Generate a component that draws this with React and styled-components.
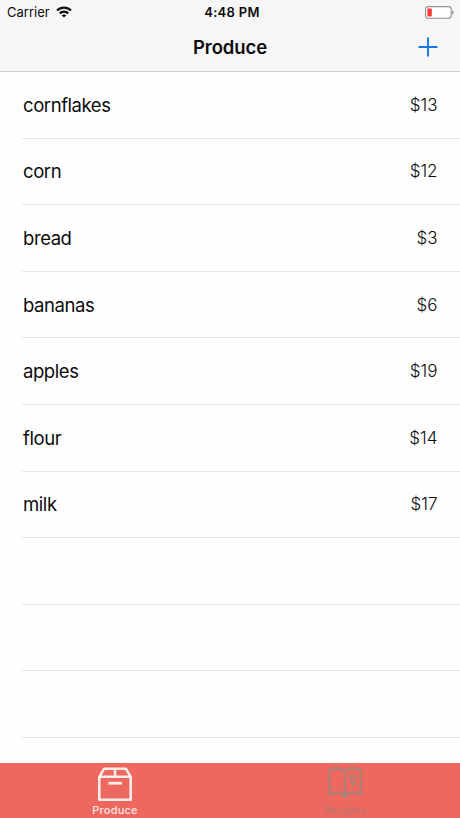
import styled, { createGlobalStyle } from "styled-components";

const items = [
  { name: "cornflakes", price: 13 },
  { name: "corn", price: 12 },
  { name: "bread", price: 3 },
  { name: "bananas", price: 6 },
  { name: "apples", price: 19 },
  { name: "flour", price: 14 },
  { name: "milk", price: 17 },
];

// the table keeps drawing separators below the last item
const emptyRows = [0, 1, 2];

const WifiIcon = () => (
  <svg width="16" height="12" viewBox="0 0 16 12" fill="none" stroke="#111" strokeWidth="2.4">
    <path d="M1.1 4.5C5 0.7 11 0.7 14.9 4.5" />
    <path d="M3.8 7.4C6.2 5.1 9.8 5.1 12.2 7.4" />
    <path d="M8 11.6L5.6 9.3C7 8.1 9 8.1 10.4 9.3Z" fill="#111" stroke="none" />
  </svg>
);

const BatteryIcon = () => (
  <svg width="29" height="13" viewBox="0 0 29 13">
    <rect x="0.6" y="0.6" width="25.6" height="11.6" rx="2.8" fill="#fff" stroke="#929294" strokeWidth="1.1" />
    <rect x="2.4" y="2.4" width="4.4" height="8" rx="0.8" fill="#fb3b35" />
    <path d="M27.2 4.4C29.1 5 29.1 7.8 27.2 8.4Z" fill="#929294" />
  </svg>
);

const PlusIcon = () => (
  <svg width="20" height="20" viewBox="0 0 20 20" stroke="#1478ee" strokeWidth="1.9">
    <path d="M10 0.5V19.5M0.5 10H19.5" />
  </svg>
);

const BoxIcon = () => (
  <svg width="36" height="35" viewBox="0 0 36 35" fill="none" stroke="#fdeceb" strokeWidth="2.6" strokeLinejoin="round">
    <path d="M2.3 9.8L7 1.8H29L33.7 9.8V32.8H2.3Z" />
    <path d="M2.3 9.8H33.7M18 1.8V9.8" />
    <path d="M11.5 16.2H25" strokeWidth="2.8" />
  </svg>
);

const BookIcon = () => (
  <svg width="36" height="32" viewBox="0 0 36 32" fill="none" stroke="#b27d73" strokeWidth="2.6" strokeLinejoin="round">
    <path d="M18 4C14 1 7.5 1 2.3 3V27.2C7.5 25 14 25 18 27.6C22 25 28.5 25 33.7 27.2V3C28.5 1 22 1 18 4Z" />
    <path d="M18 4V27.6" />
    <path d="M14.8 28C16 30.6 20 30.6 21.2 28" />
    <ellipse cx="26" cy="11.7" rx="2.3" ry="3.9" strokeWidth="2" />
    <path d="M26 13V20" strokeWidth="2.4" />
  </svg>
);

const App = () => {
  return (
    <Screen>
      <GlobalStyle />
      <Header>
        <StatusBar>
          <Carrier>Carrier<WifiIcon /></Carrier>
          <Time>4:48 PM</Time>
          <Battery><BatteryIcon /></Battery>
        </StatusBar>
        <NavBar>
          <Title>Produce</Title>
          <AddButton aria-label="Add"><PlusIcon /></AddButton>
        </NavBar>
      </Header>
      <List>
        {items.map((item) => (
          <Row key={item.name}>
            <Name>{item.name}</Name>
            <Price>${item.price}</Price>
          </Row>
        ))}
        {emptyRows.map((row) => <Row key={row} />)}
      </List>
      <TabBar>
        <Tab $active><BoxIcon /><TabLabel>Produce</TabLabel></Tab>
        <Tab><BookIcon /><TabLabel>Recipes</TabLabel></Tab>
      </TabBar>
    </Screen>
  );
};

export default App;

const GlobalStyle = createGlobalStyle`
  body {
    margin: 0;
    background: #fefefe;
  }
`;

const Screen = styled.div`
  display: flex;
  flex-direction: column;
  height: 818px;
  overflow: hidden;
  background: #fefefe;
  color: #0c0c0c;
  font-family: Inter, "Liberation Sans", sans-serif;
`;

const Header = styled.header`
  box-sizing: border-box;
  height: 72px;
  flex-shrink: 0;
  background: #f6f6f6;
  border-bottom: 1px solid #d0d0d0;
`;

const StatusBar = styled.div`
  display: grid;
  grid-template-columns: 1fr auto 1fr;
  align-items: center;
  height: 24px;
  padding: 0 6px 0 7px;
`;

const Carrier = styled.div`
  display: flex;
  align-items: center;
  gap: 6px;
  font-size: 13px;
  letter-spacing: 0;
`;

const Time = styled.div`
  font-size: 13px;
  font-weight: 600;
  letter-spacing: 0.3px;
  padding-left: 3px;
`;

const Battery = styled.div`
  display: flex;
  justify-content: flex-end;
`;

const NavBar = styled.div`
  display: grid;
  grid-template-columns: 1fr auto 1fr;
  align-items: center;
  height: 45px;
  padding: 0 22px;
`;

const Title = styled.h1`
  grid-column: 2;
  margin: 0;
  font-size: 18.5px;
  font-weight: 600;
  letter-spacing: -0.1px;
`;

const AddButton = styled.button`
  display: flex;
  justify-self: end;
  padding: 0;
  border: 0;
  background: none;
`;

const List = styled.main`
  flex: 1;
  min-height: 0;
  padding-left: 22px;
`;

const Row = styled.div`
  box-sizing: border-box;
  display: flex;
  align-items: center;
  justify-content: space-between;
  height: 66.62px;
  padding-right: 22.5px;
  border-bottom: 1px solid #e6e6e6;
`;

const Name = styled.span`
  padding-left: 1px;
  font-size: 18.5px;
  letter-spacing: -0.43px;
`;

const Price = styled.span`
  font-size: 17px;
  font-weight: 300;
`;

const TabBar = styled.nav`
  display: grid;
  grid-template-columns: 1fr 1fr;
  flex-shrink: 0;
  height: 55px;
  background: #ed685f;
`;

const Tab = styled.div`
  display: flex;
  flex-direction: column;
  align-items: center;
  justify-content: space-between;
  box-sizing: border-box;
  padding: 4px 0 1px;
  color: ${(props) => (props.$active ? "#fde4e2" : "#c0756c")};
`;

const TabLabel = styled.span`
  font-size: 11px;
  font-weight: 500;
  line-height: 13px;
  letter-spacing: 0.2px;
`;
